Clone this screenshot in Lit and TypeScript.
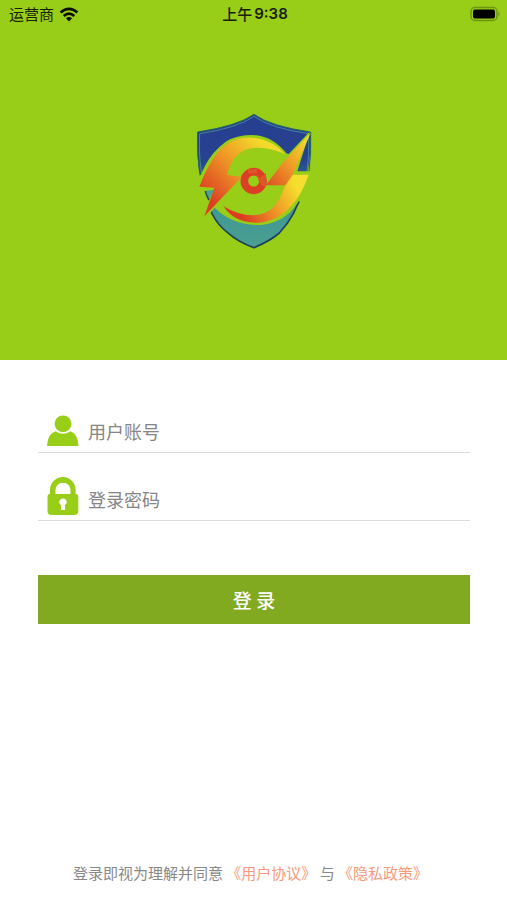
import { LitElement, html, css } from "lit";
import { customElement } from "lit/decorators.js";

@customElement("status-bar")
class StatusBar extends LitElement {
  static styles = css`
    :host {
      display: grid;
      grid-template-columns: 1fr auto 1fr;
      align-items: center;
      height: 28px;
      padding: 0 6px 0 9px;
      color: #17200a;
      font-size: 15px;
      line-height: 20px;
    }
    .carrier {
      display: flex;
      align-items: center;
      gap: 5px;
    }
    .time {
      display: flex;
      gap: 2px;
      font-weight: 500;
    }
    .digits {
      font-family: Inter, "Liberation Sans", sans-serif;
      font-weight: 600;
    }
    .battery {
      justify-self: end;
    }
    svg {
      display: block;
    }
  `;

  render() {
    return html`
      <div class="carrier">
        <span>运营商</span>
        <svg width="20" height="15" viewBox="0 0 20 15" aria-hidden="true">
          <g fill="none" stroke="#0b1004" stroke-width="2.7">
            <path d="M1.6 5.6Q10-1.9 18.4 5.6" />
            <path d="M4.7 9Q10 4.3 15.3 9" />
          </g>
          <path fill="#0b1004" d="M6.9 11.2Q10 8.6 13.1 11.2L10 14.4Z" />
        </svg>
      </div>
      <div class="time"><span>上午</span><span class="digits">9:38</span></div>
      <svg class="battery" width="31" height="16" viewBox="0 0 31 16" aria-hidden="true">
        <rect x="1" y="1.5" width="26" height="13" rx="4" fill="none" stroke="#6c9611" stroke-width="1.5" />
        <rect x="3" y="3.5" width="22" height="9" rx="2" fill="#000" />
        <path d="M28.5 5.5Q31 8 28.5 10.5Z" fill="#6c9611" />
      </svg>
    `;
  }
}

@customElement("brand-logo")
class BrandLogo extends LitElement {
  static styles = css`
    :host,
    svg {
      display: block;
    }
  `;

  render() {
    return html`
      <svg width="140" height="152" viewBox="0 0 420 456" role="img" aria-label="SOS">
        <defs>
          <linearGradient id="shield" x1="0" y1="0" x2="0" y2="1">
            <stop offset="0" stop-color="#263f90" />
            <stop offset=".34" stop-color="#27428f" />
            <stop offset=".46" stop-color="#2c5f90" />
            <stop offset=".62" stop-color="#3c9690" />
            <stop offset="1" stop-color="#4b9f92" />
          </linearGradient>
          <linearGradient id="left" gradientUnits="userSpaceOnUse" x1="60" y1="270" x2="225" y2="110">
            <stop offset="0" stop-color="#dc4023" />
            <stop offset=".5" stop-color="#ee9226" />
            <stop offset="1" stop-color="#f4d92b" />
          </linearGradient>
          <linearGradient id="right" gradientUnits="userSpaceOnUse" x1="170" y1="330" x2="335" y2="245">
            <stop offset="0" stop-color="#dc3c22" />
            <stop offset=".5" stop-color="#ee9227" />
            <stop offset="1" stop-color="#f5de2d" />
          </linearGradient>
          <linearGradient id="bolt" gradientUnits="userSpaceOnUse" x1="245" y1="235" x2="378" y2="120">
            <stop offset="0" stop-color="#df5225" />
            <stop offset=".5" stop-color="#ef9a28" />
            <stop offset="1" stop-color="#f3d92b" />
          </linearGradient>
        </defs>
        <path
          fill="url(#shield)"
          d="M210 31Q160 66 41 84Q37 183 52 238Q76 345 130 385Q162 414 210 431Q258 411 286 387Q345 325 367 218Q382 160 380 84Q260 67 210 31Z"
        />
        <path fill="none" stroke="#23655f" stroke-width="3" d="M50 213Q38 160 41 84Q160 66 210 31Q260 67 380 84Q382 150 375 204" />
        <path fill="none" stroke="#5c9fa0" stroke-width="2" d="M53 208Q44 160 47 89Q160 72 210 37Q260 73 374 89Q376 150 369 204" />
        <path fill="none" stroke="#21405c" stroke-width="5" d="M52 238Q76 345 130 385Q162 414 210 431Q258 411 286 387Q335 335 355 260" />
        <path
          fill="#98cd18"
          d="M34 220L50 213L64 184Q85 143 125 113Q165 89 217 94Q270 101 307 148L314 150L378 82L340 202H394V292H344Q307 355 232 363Q145 365 92 311L60 348L34 260Z"
        />
        <path fill="#4aa398" d="M66 260L91 257L77 284Z" />
        <path fill="none" stroke="#244c62" stroke-width="5" d="M64 261Q68 276 75 288" />
        <path
          fill="url(#left)"
          d="M46 248Q67 190 100 146Q143 96 205 101Q265 106 303 151Q240 120 183 137Q143 155 129 213L174 218L61 337L91 251Z"
        />
        <path
          fill="url(#right)"
          d="M326 212H374Q352 275 322 306Q279 353 222 356Q150 358 119 307Q160 334 210 334Q245 332 268 310Q290 285 304 243Z"
        />
        <path fill="url(#bolt)" d="M380 86L326 213L304 244H245L300 172Z" />
        <circle cx="209" cy="231" r="28" fill="none" stroke="#db4025" stroke-width="23" />
        <path fill="#e1532a" d="M192 195L219 195L219 208L192 208Z" />
        <path fill="#e1532a" d="M218 210L228 222L246 207V246H233L224 230Z" />
      </svg>
    `;
  }
}

@customElement("app-root")
class AppRoot extends LitElement {
  static styles = css`
    :host {
      display: flex;
      flex-direction: column;
      min-height: 100vh;
      box-sizing: border-box;
      background: #fff;
      font-family: "Noto Sans CJK SC", sans-serif;
    }
    .hero {
      height: 40vh;
      background: #98cd18;
    }
    .brand {
      display: flex;
      justify-content: center;
      padding-top: 76px;
    }
    form {
      display: flex;
      flex-direction: column;
      padding: 49px 37px 0 38px;
    }
    .field {
      display: flex;
      align-items: center;
      gap: 9px;
      height: 43px;
      margin-bottom: 24px;
      padding-left: 9px;
      border-bottom: 1px solid #dcdcdc;
    }
    .field svg {
      display: block;
      flex: none;
      fill: #98cd18;
    }
    input {
      flex: 1;
      min-width: 0;
      height: 32px;
      padding: 0 3px 0 0;
      border: 0;
      outline: 0;
      background: none;
      color: #333;
      font: 400 18px/32px "Noto Sans CJK SC", sans-serif;
    }
    input::placeholder {
      color: #858585;
      opacity: 1;
    }
    button {
      height: 49px;
      margin-top: 30px;
      padding: 0;
      border: 0;
      background: #81aa20;
      color: #fff;
      font: 500 19px/28px "Noto Sans CJK SC", sans-serif;
    }
    footer {
      margin-top: auto;
      padding: 0 6px 16px 0;
      color: #888;
      font-size: 15px;
      line-height: 22px;
      text-align: center;
    }
    a {
      color: #f79a7c;
      text-decoration: none;
    }
  `;

  render() {
    return html`
      <header class="hero">
        <status-bar></status-bar>
        <div class="brand"><brand-logo></brand-logo></div>
      </header>
      <form @submit=${(e: Event) => e.preventDefault()}>
        <div class="field">
          <svg width="32" height="32" viewBox="0 0 32 32" aria-hidden="true">
            <circle cx="16" cy="8.8" r="8.4" />
            <path d="M0 31Q.5 18.5 8.7 16.2Q16 21.5 23.3 16.2Q31 18.5 31.5 31Z" />
          </svg>
          <input type="text" aria-label="用户账号" placeholder="用户账号" autocomplete="username" />
        </div>
        <div class="field">
          <svg width="32" height="46" viewBox="0 0 32 46" aria-hidden="true">
            <path
              fill-rule="evenodd"
              d="M3 18V14A12.8 13 0 0 1 28.6 14V18Q31.3 18 31.3 21V35Q31.3 39 27.3 39H4.5Q.5 39 .5 35V21Q.5 18 3 18ZM8.5 18H23.5V14A7.5 7.3 0 0 0 8.5 14ZM16 22.5A3.5 3.5 0 0 0 14 29V34H18V29A3.5 3.5 0 0 0 16 22.5Z"
            />
          </svg>
          <input type="password" aria-label="登录密码" placeholder="登录密码" autocomplete="current-password" />
        </div>
        <button type="submit">登 录</button>
      </form>
      <footer>登录即视为理解并同意 <a href="#terms">《用户协议》</a> 与 <a href="#privacy">《隐私政策》</a></footer>
    `;
  }
}
